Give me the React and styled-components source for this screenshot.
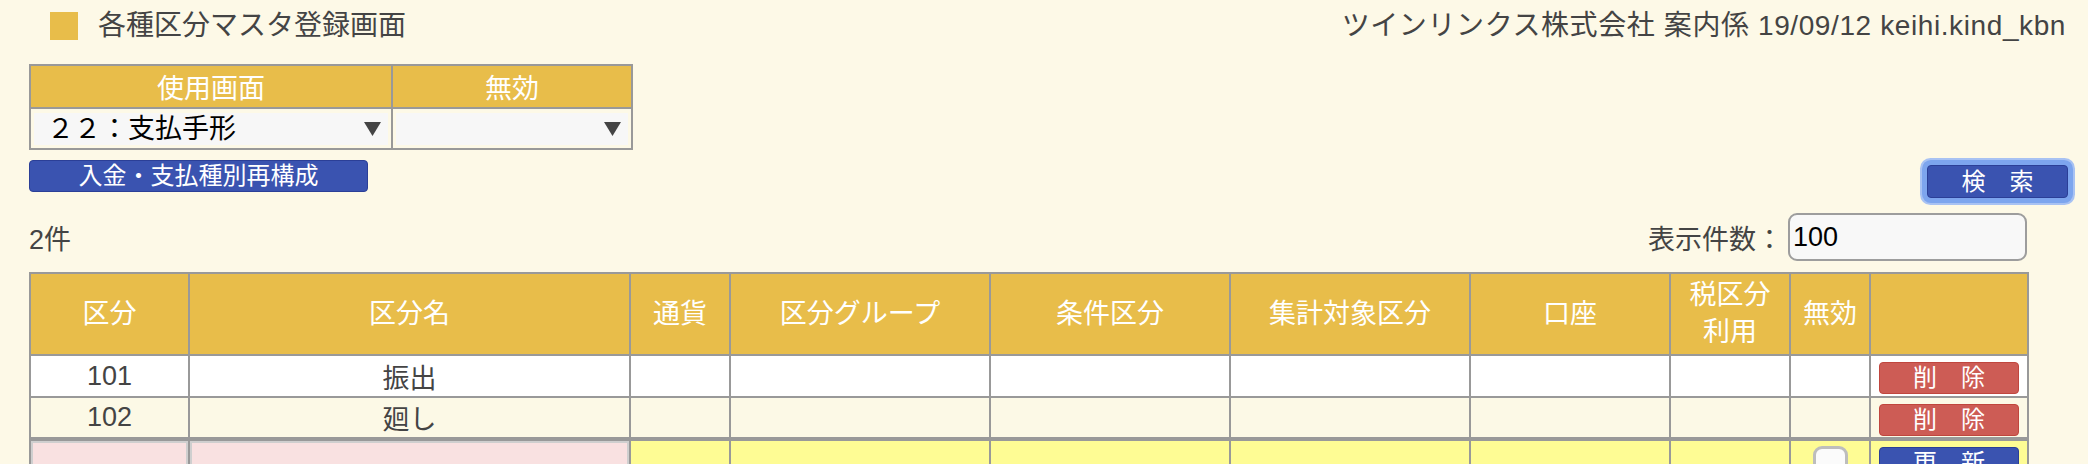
import React from "react";
import styled, { createGlobalStyle } from "styled-components";

const GlobalStyle = createGlobalStyle`
  body {
    margin: 0;
    background: #fdf9e7;
    font-family: "Liberation Sans", "Noto Sans CJK JP", sans-serif;
    color: #444;
  }
`;

const Page = styled.div`
  width: 2088px;
  min-height: 464px;
`;

const Header = styled.header`
  display: flex;
  align-items: center;
  justify-content: space-between;
  height: 52px;
  padding: 0 22px 0 50px;
`;

const Title = styled.h1`
  display: flex;
  align-items: center;
  margin: 0;
  font-size: 28px;
  font-weight: normal;
  line-height: 1;
  color: #444;
`;

const TitleMark = styled.span`
  width: 28px;
  height: 28px;
  margin-right: 20px;
  background: #e8bd4a;
`;

const UserInfo = styled.div`
  font-size: 28px;
  line-height: 1;
  letter-spacing: 0.6px;
  color: #444;
`;

const Main = styled.div`
  padding: 0 20px 0 29px;
`;

const ConditionTable = styled.table`
  margin-top: 12px;
  width: 602px;
  border-collapse: collapse;
  table-layout: fixed;
  border: 2px solid #999;
  border-left-color: #666;
  border-bottom-color: #777;

  th {
    height: 41px;
    padding: 0;
    background: #e8bd4a;
    color: #fff;
    font-size: 27px;
    font-weight: normal;
    border: 2px solid #999;
  }

  td {
    height: 41px;
    padding: 3px;
    border: 2px solid #999;
    box-sizing: border-box;
  }
`;

const SelectWrap = styled.div`
  position: relative;
  height: 32px;
`;

const Select = styled.select`
  appearance: none;
  width: 100%;
  height: 32px;
  padding: 0 0 0 13px;
  border: none;
  background: #f7f7f7;
  color: #000;
  font-family: "Liberation Sans", "Noto Sans CJK JP", sans-serif;
  font-size: 27px;
  line-height: 32px;
`;

const Arrow = styled.svg`
  position: absolute;
  right: 7px;
  top: 9px;
  pointer-events: none;
`;

const ButtonRow = styled.div`
  display: flex;
  justify-content: space-between;
  align-items: flex-start;
  margin-top: 10px;
`;

const Button = styled.button`
  height: ${(p) => p.$h || 32}px;
  width: ${(p) => p.$w}px;
  margin-top: ${(p) => p.$top || 0}px;
  padding: 0;
  border: 1px solid ${(p) => (p.$red ? "#c0463e" : "#2b3f97")};
  border-radius: 4px;
  background: ${(p) => (p.$red ? "#cd5c55" : "#3a53b0")};
  color: #fff;
  font-family: "Liberation Sans", "Noto Sans CJK JP", sans-serif;
  font-size: 24px;
  line-height: 1;
  white-space: pre;
  box-shadow: ${(p) =>
    p.$focus ? "0 0 0 5px #7da5ee, 0 0 0 7px #a8c2f3" : "none"};
`;

const Results = styled.div`
  width: 1998px;
`;

const CountRow = styled.div`
  display: flex;
  justify-content: space-between;
  align-items: center;
  height: 48px;
  margin-top: 15px;
  font-size: 27px;
`;

const PerPage = styled.label`
  display: flex;
  align-items: center;
  gap: 5px;
`;

const PerPageInput = styled.input`
  width: 239px;
  height: 48px;
  box-sizing: border-box;
  padding: 0 3px;
  border: 2px solid #9d9d9d;
  border-radius: 9px;
  background: #f8f8f8;
  color: #000;
  font-family: "Liberation Sans", "Noto Sans CJK JP", sans-serif;
  font-size: 27px;
`;

const ListTable = styled.table`
  margin-top: 11px;
  width: 1998px;
  border-collapse: collapse;
  table-layout: fixed;
  font-size: 27px;

  th {
    height: 80px;
    padding: 0;
    background: #e8bd4a;
    color: #fff;
    font-weight: normal;
    line-height: 37px;
    border: 2px solid #999;
  }

  td {
    padding: 0;
    border: 2px solid #999;
    text-align: center;
    color: #444;
  }
`;

const Row = styled.tr`
  height: 42px;
  background: ${(p) => p.$bg};

  td {
    border-top-width: ${(p) => (p.$new ? 4 : 2)}px;
  }
`;

const ActionCell = styled.td`
  && {
    vertical-align: top;
    padding-top: 6px;
  }
`;

const NewCell = styled.td`
  && {
    height: 50px;
    background: ${(p) => (p.$pink ? "#f9e1e1" : "#fefc94")};
    vertical-align: top;
  }
`;

const PinkInput = styled.div`
  height: 50px;
  box-sizing: border-box;
  border: 2px solid #cfcfcf;
  background: #f9e1e1;
`;

const CheckBox = styled.span`
  display: inline-block;
  width: 35px;
  height: 35px;
  margin-top: 5px;
  box-sizing: border-box;
  border: 3px solid #bdbdbd;
  border-radius: 9px;
  background: #fbfbfb;
`;

const columns = [
  { label: "区分", width: 159 },
  { label: "区分名", width: 441 },
  { label: "通貨", width: 100 },
  { label: "区分グループ", width: 260 },
  { label: "条件区分", width: 240 },
  { label: "集計対象区分", width: 240 },
  { label: "口座", width: 200 },
  { label: ["税区分", "利用"], width: 120 },
  { label: "無効", width: 80 },
  { label: "", width: 158 },
];

const rows = [
  { code: "101", name: "振出", bg: "#fff" },
  { code: "102", name: "廻し", bg: "#fcf9e6" },
];

const DownArrow = () => (
  <Arrow width="17" height="14" viewBox="0 0 17 14">
    <path d="M0 0 H17 L8.5 14 Z" fill="#444" />
  </Arrow>
);

const App = () => {
  return (
    <Page>
      <GlobalStyle />
      <Header>
        <Title>
          <TitleMark />
          各種区分マスタ登録画面
        </Title>
        <UserInfo>ツインリンクス株式会社 案内係 19/09/12 keihi.kind_kbn</UserInfo>
      </Header>

      <Main>
        <ConditionTable>
          <colgroup>
            <col style={{ width: 362 }} />
            <col style={{ width: 240 }} />
          </colgroup>
          <thead>
            <tr>
              <th>使用画面</th>
              <th>無効</th>
            </tr>
          </thead>
          <tbody>
            <tr>
              <td>
                <SelectWrap>
                  <Select defaultValue="22">
                    <option value="22">２２：支払手形</option>
                  </Select>
                  <DownArrow />
                </SelectWrap>
              </td>
              <td>
                <SelectWrap>
                  <Select defaultValue="">
                    <option value=""></option>
                  </Select>
                  <DownArrow />
                </SelectWrap>
              </td>
            </tr>
          </tbody>
        </ConditionTable>

        <ButtonRow>
          <Button $w={339}>入金・支払種別再構成</Button>
          <Button $w={141} $h={33} $top={5} $focus>
            検　索
          </Button>
        </ButtonRow>

        <Results>
          <CountRow>
            <span>2件</span>
            <PerPage>
              表示件数：
              <PerPageInput defaultValue="100" />
            </PerPage>
          </CountRow>

          <ListTable>
            <colgroup>
              {columns.map((c, i) => (
                <col key={i} style={{ width: c.width }} />
              ))}
            </colgroup>
            <thead>
              <tr>
                {columns.map((c, i) => (
                  <th key={i}>
                    {Array.isArray(c.label)
                      ? c.label.map((l) => <div key={l}>{l}</div>)
                      : c.label}
                  </th>
                ))}
              </tr>
            </thead>
            <tbody>
              {rows.map((r) => (
                <Row key={r.code} $bg={r.bg}>
                  <td>{r.code}</td>
                  <td>{r.name}</td>
                  <td />
                  <td />
                  <td />
                  <td />
                  <td />
                  <td />
                  <td />
                  <ActionCell>
                    <Button $w={140} $red>
                      削　除
                    </Button>
                  </ActionCell>
                </Row>
              ))}
              <Row $new $bg="#fefc94">
                <NewCell $pink>
                  <PinkInput />
                </NewCell>
                <NewCell $pink>
                  <PinkInput />
                </NewCell>
                <NewCell />
                <NewCell />
                <NewCell />
                <NewCell />
                <NewCell />
                <NewCell />
                <NewCell>
                  <CheckBox />
                </NewCell>
                <NewCell>
                  <Button $w={140} $top={6}>
                    更　新
                  </Button>
                </NewCell>
              </Row>
            </tbody>
          </ListTable>
        </Results>
      </Main>
    </Page>
  );
};

export default App;
